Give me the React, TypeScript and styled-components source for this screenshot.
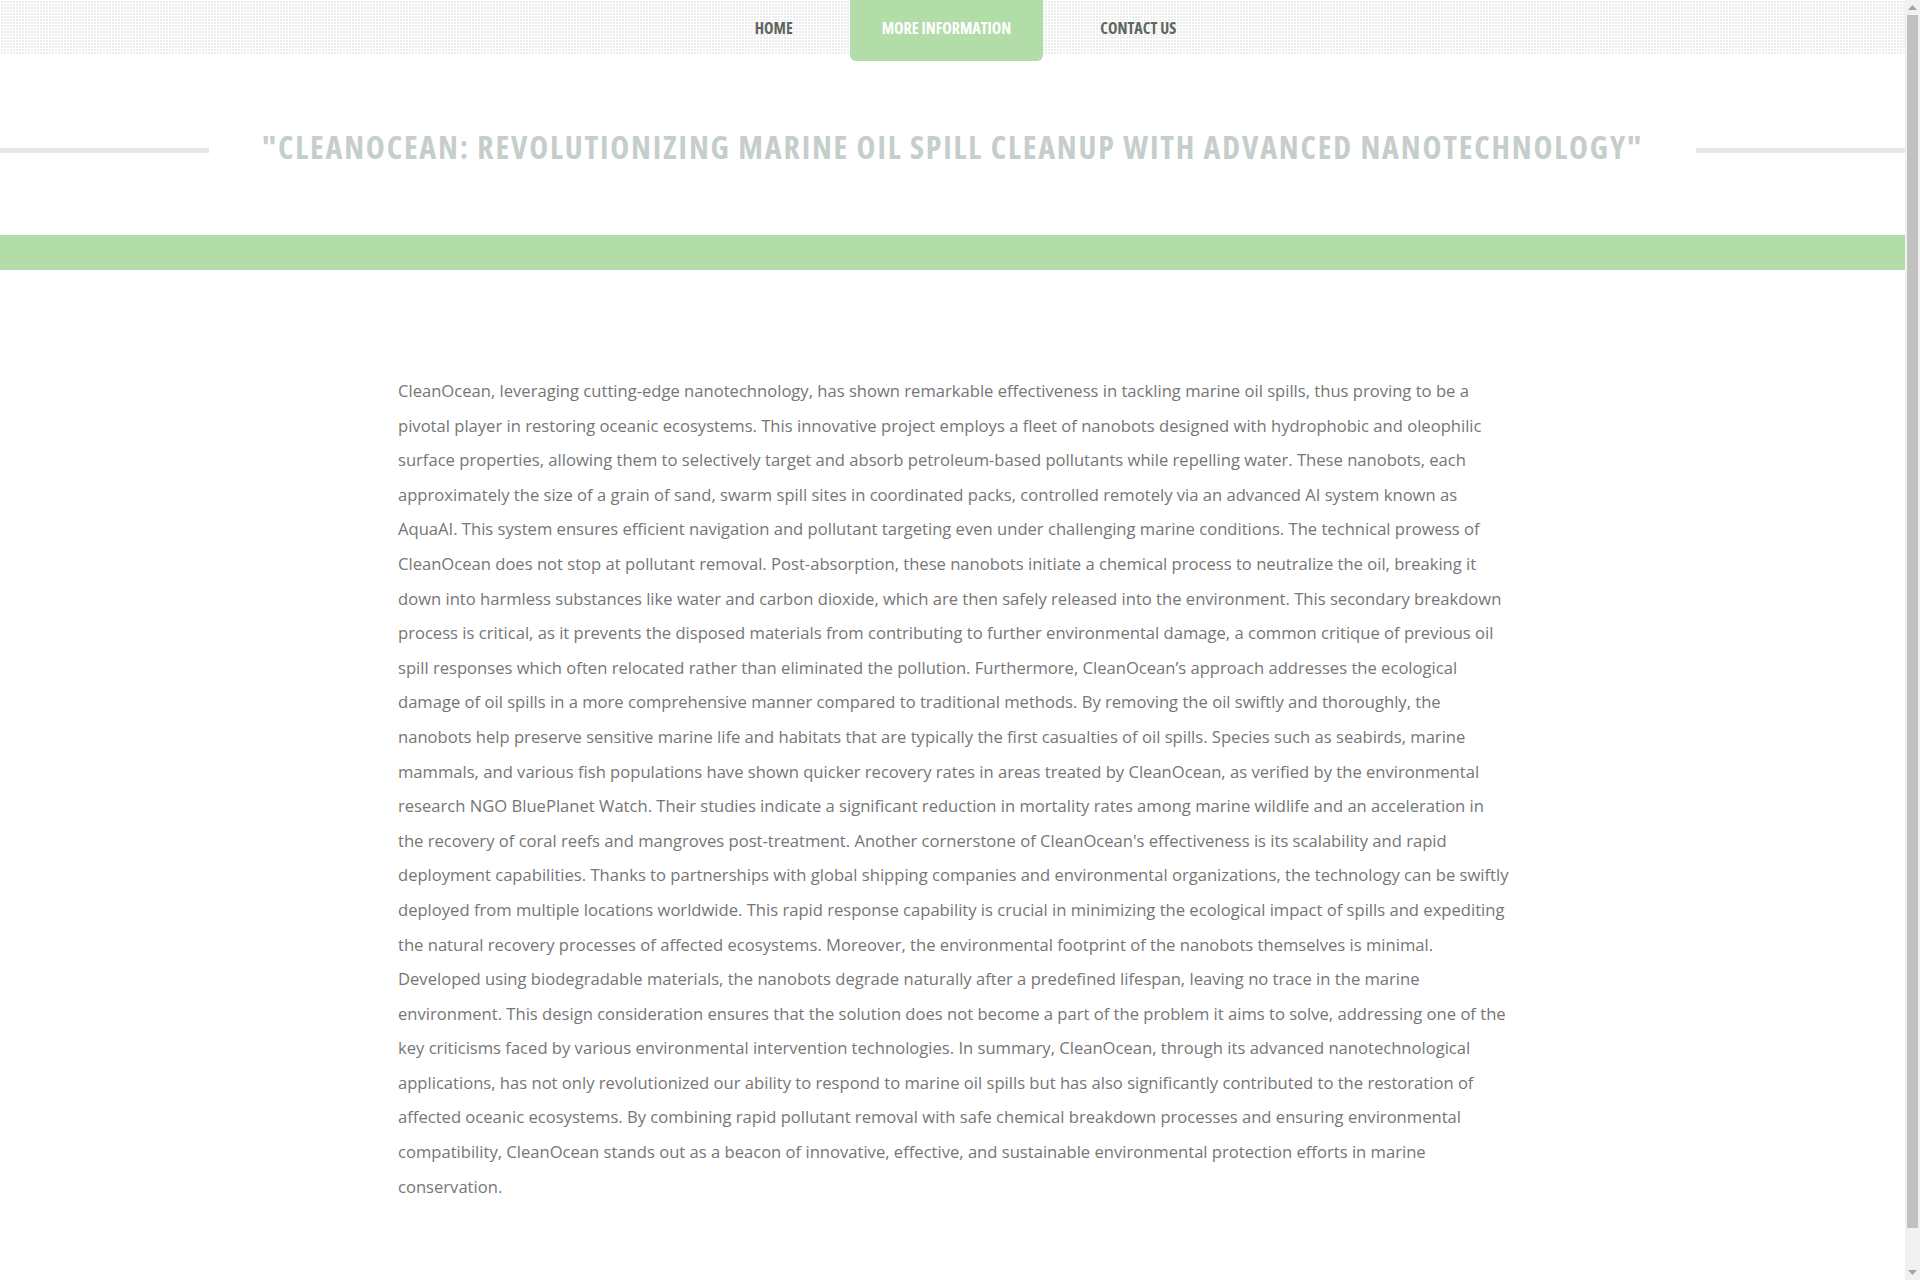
import React from "react";
import styled, { createGlobalStyle } from "styled-components";

const Global = createGlobalStyle`
  html, body { margin: 0; padding: 0; background: #fff; }
  body { font-family: "Open Sans", "Liberation Sans", sans-serif; }
`;

const Page = styled.div`
  margin-right: 15px;
`;

const NavBar = styled.nav`
  height: 55px;
  background-color: #ececec;
  background-image: linear-gradient(90deg, #fff 1px, transparent 1px),
    linear-gradient(#fff 1px, transparent 1px);
  background-size: 3px 3px;
  display: flex;
  justify-content: center;
  align-items: flex-start;
`;

const NavList = styled.ul`
  list-style: none;
  margin: 0;
  padding: 0;
  display: flex;
`;

const NavItem = styled.li<{ $active?: boolean }>`
  height: ${(p) => (p.$active ? "61px" : "55px")};
  margin-left: 26px;
  padding: 0 31.5px ${(p) => (p.$active ? "6px" : "0")};
  box-sizing: border-box;
  display: flex;
  align-items: center;
  justify-content: center;
  background: ${(p) => (p.$active ? "#b2dda9" : "transparent")};
  border-radius: 0 0 6px 6px;
  color: ${(p) => (p.$active ? "#fff" : "#5e6661")};
  font-family: "Open Sans", "Liberation Sans Narrow", sans-serif;
  font-stretch: 75%;
  font-weight: 700;
  font-size: 16px;
  text-transform: uppercase;
  cursor: pointer;
  white-space: nowrap;
`;

const TitleRow = styled.header`
  display: flex;
  align-items: center;
  height: 180px;
  padding-top: 2px;
  box-sizing: border-box;
`;

const Rule = styled.span`
  flex: 1;
  height: 5px;
  background: #e5e8e7;
  margin-top: 9px;
`;

const Title = styled.h1`
  margin: 0 53px;
  font-family: "Open Sans", "Liberation Sans Narrow", sans-serif;
  font-stretch: 75%;
  font-weight: 700;
  font-size: 32px;
  letter-spacing: 1.8px;
  color: #c5ceca;
  text-transform: uppercase;
  white-space: nowrap;
`;

const GreenBand = styled.div`
  height: 35px;
  background: #b2dda9;
`;

const Content = styled.main`
  max-width: 1113px;
  margin: 0 auto;
  padding: 104px 12px 114px 16px;
`;

const Paragraph = styled.p`
  margin: 0;
  font-family: "Open Sans", sans-serif;
  font-size: 16.6px;
  line-height: 34.6px;
  color: #767676;
`;

const ScrollBar = styled.aside`
  position: fixed;
  top: 0;
  right: 0;
  width: 15px;
  height: 100vh;
  background: #f1f1f1;
  display: flex;
  flex-direction: column;
`;

const ScrollButton = styled.div`
  height: 15px;
  display: flex;
  align-items: center;
  justify-content: center;
`;

const ScrollTrack = styled.div`
  flex: 1;
  padding: 0 2px;
`;

const ScrollThumb = styled.div`
  height: 97%;
  background: #c1c1c1;
`;

const Arrow = ({ down }: { down?: boolean }) => (
  <svg width="9" height="6" viewBox="0 0 9 6">
    <polygon points={down ? "0,0 9,0 4.5,5" : "0,5 9,5 4.5,0"} fill="#a3a3a3" />
  </svg>
);

const text =
  "CleanOcean, leveraging cutting-edge nanotechnology, has shown remarkable effectiveness in tackling marine oil spills, thus proving to be a pivotal player in restoring oceanic ecosystems. This innovative project employs a fleet of nanobots designed with hydrophobic and oleophilic surface properties, allowing them to selectively target and absorb petroleum-based pollutants while repelling water. These nanobots, each approximately the size of a grain of sand, swarm spill sites in coordinated packs, controlled remotely via an advanced AI system known as AquaAI. This system ensures efficient navigation and pollutant targeting even under challenging marine conditions. The technical prowess of CleanOcean does not stop at pollutant removal. Post-absorption, these nanobots initiate a chemical process to neutralize the oil, breaking it down into harmless substances like water and carbon dioxide, which are then safely released into the environment. This secondary breakdown process is critical, as it prevents the disposed materials from contributing to further environmental damage, a common critique of previous oil spill responses which often relocated rather than eliminated the pollution. Furthermore, CleanOcean\u2019s approach addresses the ecological damage of oil spills in a more comprehensive manner compared to traditional methods. By removing the oil swiftly and thoroughly, the nanobots help preserve sensitive marine life and habitats that are typically the first casualties of oil spills. Species such as seabirds, marine mammals, and various fish populations have shown quicker recovery rates in areas treated by CleanOcean, as verified by the environmental research NGO BluePlanet Watch. Their studies indicate a significant reduction in mortality rates among marine wildlife and an acceleration in the recovery of coral reefs and mangroves post-treatment. Another cornerstone of CleanOcean's effectiveness is its scalability and rapid deployment capabilities. Thanks to partnerships with global shipping companies and environmental organizations, the technology can be swiftly deployed from multiple locations worldwide. This rapid response capability is crucial in minimizing the ecological impact of spills and expediting the natural recovery processes of affected ecosystems. Moreover, the environmental footprint of the nanobots themselves is minimal. Developed using biodegradable materials, the nanobots degrade naturally after a predefined lifespan, leaving no trace in the marine environment. This design consideration ensures that the solution does not become a part of the problem it aims to solve, addressing one of the key criticisms faced by various environmental intervention technologies. In summary, CleanOcean, through its advanced nanotechnological applications, has not only revolutionized our ability to respond to marine oil spills but has also significantly contributed to the restoration of affected oceanic ecosystems. By combining rapid pollutant removal with safe chemical breakdown processes and ensuring environmental compatibility, CleanOcean stands out as a beacon of innovative, effective, and sustainable environmental protection efforts in marine conservation.";

export default function App() {
  return (
    <>
      <Global />
      <Page>
        <NavBar>
          <NavList>
            <NavItem>Home</NavItem>
            <NavItem $active>More Information</NavItem>
            <NavItem>Contact Us</NavItem>
          </NavList>
        </NavBar>
        <TitleRow>
          <Rule />
          <Title>"CleanOcean: Revolutionizing Marine Oil Spill Cleanup with Advanced Nanotechnology"</Title>
          <Rule />
        </TitleRow>
        <GreenBand />
        <Content>
          <Paragraph>{text}</Paragraph>
        </Content>
      </Page>
      <ScrollBar aria-hidden>
        <ScrollButton>
          <Arrow />
        </ScrollButton>
        <ScrollTrack>
          <ScrollThumb />
        </ScrollTrack>
        <ScrollButton>
          <Arrow down />
        </ScrollButton>
      </ScrollBar>
    </>
  );
}
